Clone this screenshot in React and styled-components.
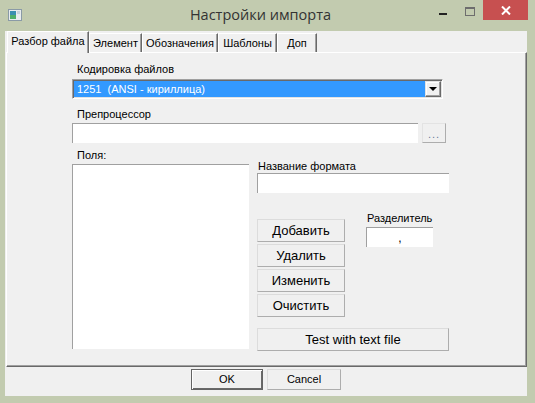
import React from "react";
import styled, { createGlobalStyle } from "styled-components";

const Global = createGlobalStyle`
  html, body { margin: 0; padding: 0; }
  body { font-family: "Liberation Sans", Arial, sans-serif; background: #c2cbaf; }
`;

const Window = styled.div`
  width: 535px;
  height: 403px;
  background: #c2cbaf;
  display: flex;
  flex-direction: column;
  overflow: hidden;
`;

const TitleBar = styled.div`
  height: 31px;
  display: grid;
  grid-template-columns: 1fr auto 1fr;
  align-items: start;
`;

const AppIcon = styled.div`
  margin: 9px 0 0 8px;
  width: 14px;
  height: 12px;
  display: flex;
`;

const Title = styled.div`
  font-family: "Open Sans", "Liberation Sans", sans-serif;
  font-size: 14.5px;
  line-height: 20px;
  margin-top: 5px;
  margin-right: 14px;
  color: #333;
`;

const Controls = styled.div`
  justify-self: end;
  display: flex;
  align-items: flex-start;
  margin-right: 7px;
`;

const Minimize = styled.div`
  width: 8px;
  height: 2px;
  background: #222;
  margin: 13px 18px 0 0;
`;

const Maximize = styled.div`
  width: 8px;
  height: 6px;
  border: 1px solid #6d6d6d;
  border-top-width: 2px;
  margin: 7px 8px 0 0;
`;

const Close = styled.div`
  width: 45px;
  height: 20px;
  background: #c75050;
  color: #fff;
  display: flex;
  align-items: center;
  justify-content: center;
`;

const Client = styled.div`
  flex: 1;
  margin: 0 8px 7px 5px;
  background: #f0f0f0;
  display: flex;
  flex-direction: column;
`;

const TabStrip = styled.div`
  height: 21px;
  display: flex;
  align-items: flex-end;
  padding-left: 2px;
  position: relative;
  z-index: 1;
`;

const Tab = styled.div`
  height: ${({ active }) => (active ? "22px" : "19px")};
  margin-bottom: ${({ active }) => (active ? "-1px" : "0")};
  box-sizing: border-box;
  padding: 0;
  font-size: 11px;
  line-height: ${({ active }) => (active ? "19px" : "18px")};
  text-align: center;
  color: #000;
  background: #f0f0f0;
  border-top: 1px solid #fff;
  border-left: 1px solid #fff;
  border-right: 1px solid #696969;
  box-shadow: inset -1px 0 0 #a0a0a0;
  width: ${({ w }) => w}px;
  white-space: nowrap;
`;

const Panel = styled.div`
  flex: 1;
  margin-left: 1px;
  box-sizing: border-box;
  border-top: 1px solid #fff;
  border-left: 1px solid #fff;
  border-right: 1px solid #696969;
  border-bottom: 1px solid #696969;
  box-shadow: inset -1px -1px 0 #a0a0a0;
  padding: 10px 0 0 65px;
  display: flex;
  flex-direction: column;
  align-items: flex-start;
`;

const Label = styled.div`
  font-size: 11px;
  line-height: 13px;
  color: #000;
  padding-left: ${({ indent }) => indent}px;
  margin-bottom: ${({ gap }) => gap}px;
  white-space: nowrap;
`;

const Combo = styled.div`
  width: 371px;
  height: 20px;
  box-sizing: border-box;
  background: #fff;
  border-top: 1px solid #a0a0a0;
  border-left: 1px solid #a0a0a0;
  border-right: 1px solid #fff;
  border-bottom: 1px solid #fff;
  box-shadow: inset 1px 1px 0 #696969, inset -1px -1px 0 #e3e3e3;
  padding: 1px;
  display: flex;
  margin-bottom: 9px;
`;

const ComboValue = styled.div`
  flex: 1;
  background: #3399ff;
  color: #fff;
  font-size: 11px;
  line-height: 16px;
  padding-left: 3px;
  white-space: pre;
`;

const DropButton = styled.div`
  width: 16px;
  box-sizing: border-box;
  background: #f0f0f0;
  border-top: 1px solid #e3e3e3;
  border-left: 1px solid #e3e3e3;
  border-right: 1px solid #696969;
  border-bottom: 1px solid #696969;
  box-shadow: inset -1px -1px 0 #a0a0a0, inset 1px 1px 0 #fff;
  display: flex;
  align-items: center;
  justify-content: center;
`;

const Arrow = styled.div`
  width: 0;
  height: 0;
  border-left: 4px solid transparent;
  border-right: 4px solid transparent;
  border-top: 4px solid #000;
`;

const Row = styled.div`
  display: flex;
  align-items: ${({ align }) => align || "center"};
  gap: ${({ gap }) => gap || 0}px;
  margin-bottom: ${({ mb }) => mb || 0}px;
`;

const TextInput = styled.div`
  width: ${({ w }) => w}px;
  height: ${({ h }) => h || 20}px;
  box-sizing: border-box;
  background: #fff;
  border-top: 1px solid #a0a0a0;
  border-left: 1px solid #a0a0a0;
  font-size: 12px;
  color: #000;
  display: flex;
  align-items: center;
  justify-content: center;
`;

const DotsButton = styled.div`
  width: 24px;
  height: 20px;
  box-sizing: border-box;
  border: 1px solid #adadad;
  border-top-color: #e3e3e3;
  border-left-color: #e3e3e3;
  background: #f0f0f0;
  color: #6a7b99;
  font-size: 11px;
  line-height: 20px;
  text-align: center;
  letter-spacing: 1px;
`;

const Column = styled.div`
  display: flex;
  flex-direction: column;
  align-items: flex-start;
  margin-top: ${({ mt }) => mt || 0}px;
  margin-left: ${({ ml }) => ml || 0}px;
`;

const Button = styled.div`
  width: ${({ w }) => w}px;
  height: 23px;
  box-sizing: border-box;
  border: 1px solid #adadad;
  border-top-color: #dcdcdc;
  border-left-color: #dcdcdc;
  background: #f0f0f0;
  font-size: 13px;
  line-height: 21px;
  text-align: center;
  color: #000;
  margin-bottom: ${({ mb }) => mb || 0}px;
`;

const Footer = styled.div`
  height: 27px;
  display: flex;
  justify-content: center;
  align-items: flex-start;
  gap: 4px;
  padding-top: 2px;
`;

const DialogButton = styled.div`
  width: ${({ w }) => w}px;
  height: 21px;
  box-sizing: border-box;
  background: #f0f0f0;
  border: 1px solid ${({ primary }) => (primary ? "#646464" : "#adadad")};
  border-top-color: ${({ primary }) => (primary ? "#646464" : "#dcdcdc")};
  border-left-color: ${({ primary }) => (primary ? "#646464" : "#dcdcdc")};
  box-shadow: ${({ primary }) =>
    primary ? "inset 1px 1px 0 #fff, inset -1px -1px 0 #696969" : "none"};
  font-size: 11px;
  line-height: 19px;
  text-align: center;
  color: #000;
`;

export default function App() {
  return (
    <Window>
      <Global />
      <TitleBar>
        <AppIcon>
          <svg width="14" height="12" viewBox="0 0 14 12">
            <rect x="0.5" y="0.5" width="13" height="11" fill="#e8ecef" stroke="#8a9aa6" />
            <rect x="2" y="2" width="6" height="8" fill="#3a8fb0" />
            <rect x="2" y="6" width="6" height="4" fill="#4fae6a" />
            <rect x="9" y="2" width="3" height="3" fill="#c7d3dc" />
          </svg>
        </AppIcon>
        <Title>Настройки импорта</Title>
        <Controls>
          <Minimize />
          <Maximize />
          <Close>
            <svg width="10" height="9" viewBox="0 0 10 9">
              <path d="M1 0.5 L9 8.5 M9 0.5 L1 8.5" stroke="#fff" strokeWidth="2" />
            </svg>
          </Close>
        </Controls>
      </TitleBar>
      <Client>
        <TabStrip>
          <Tab active w={82}>Разбор файла</Tab>
          <Tab w={53}>Элемент</Tab>
          <Tab w={76}>Обозначения</Tab>
          <Tab w={59}>Шаблоны</Tab>
          <Tab w={40}>Доп</Tab>
        </TabStrip>
        <Panel>
          <Label indent={5} gap={3}>Кодировка файлов</Label>
          <Combo>
            <ComboValue>1251  (ANSI - кириллица)</ComboValue>
            <DropButton>
              <Arrow />
            </DropButton>
          </Combo>
          <Label indent={5} gap={2}>Препроцессор</Label>
          <Row gap={4} mb={6}>
            <TextInput w={346} />
            <DotsButton>...</DotsButton>
          </Row>
          <Row align="flex-start" gap={8}>
            <Column>
              <Label indent={5} gap={2}>Поля:</Label>
              <TextInput w={177} h={185} />
            </Column>
            <Column mt={11}>
              <Label indent={1} gap={0}>Название формата</Label>
              <TextInput w={192} />
              <Row align="flex-start">
                <Column mt={26}>
                  <Button w={88} mb={2}>Добавить</Button>
                  <Button w={88} mb={2}>Удалить</Button>
                  <Button w={88} mb={2}>Изменить</Button>
                  <Button w={88}>Очистить</Button>
                </Column>
                <Column mt={19} ml={21}>
                  <Label indent={1} gap={2}>Разделитель</Label>
                  <TextInput w={67}>,</TextInput>
                </Column>
              </Row>
              <Column mt={11}>
                <Button w={192}>Test with text file</Button>
              </Column>
            </Column>
          </Row>
        </Panel>
        <Footer>
          <DialogButton primary w={72}>OK</DialogButton>
          <DialogButton w={74}>Cancel</DialogButton>
        </Footer>
      </Client>
    </Window>
  );
}
